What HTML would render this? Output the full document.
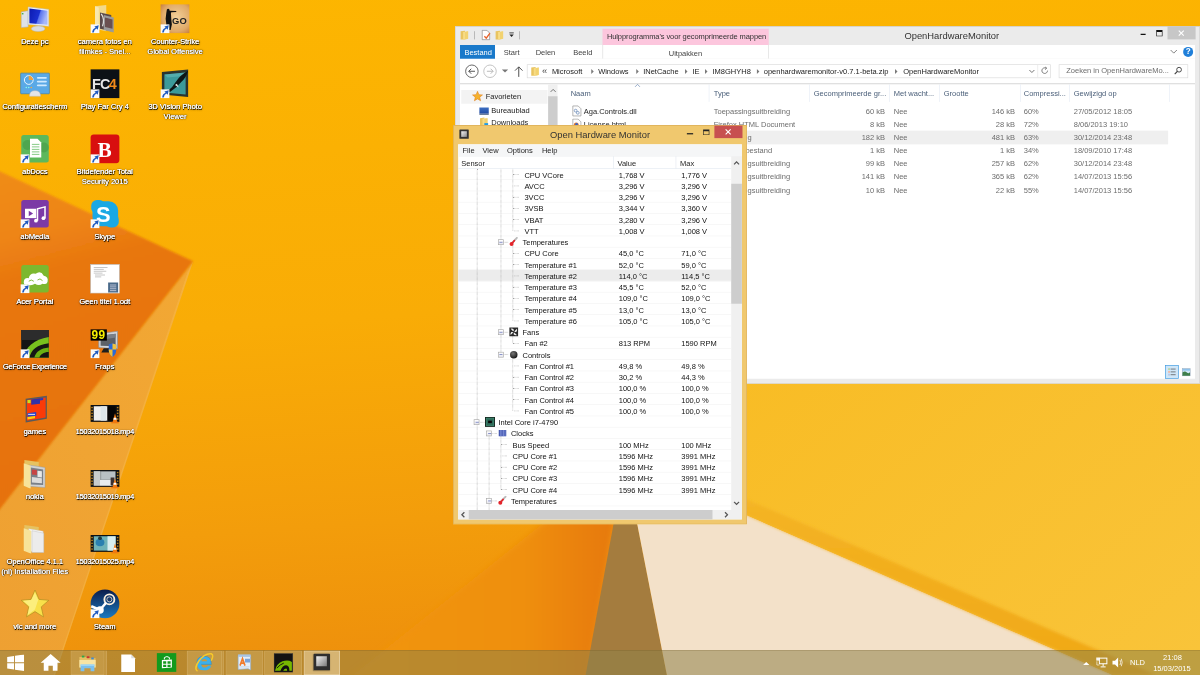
<!DOCTYPE html><html><head><meta charset="utf-8"><style>
html,body{margin:0;padding:0;width:1200px;height:675px;overflow:hidden;background:#f6a60e}
#st{position:absolute;left:0;top:0;width:1920px;height:1080px;transform:scale(0.625);transform-origin:0 0;overflow:hidden;font-family:"Liberation Sans",sans-serif;font-size:12px;color:#000}
.a{position:absolute}
.t{position:absolute;white-space:pre;line-height:15px}
.dl{width:160px;text-align:center;color:#fff;text-shadow:0.4px 0 0 #fff,1px 1px 1px #000,0 0 2px rgba(0,0,0,0.9),1px 1px 3px rgba(0,0,0,0.6)}
</style></head><body><div id="st">
<svg class="a" style="left:0;top:0" width="1920" height="1080" viewBox="0 0 1920 1080">
<defs>
<linearGradient id="gbase" x1="0" y1="0" x2="0.12" y2="1">
<stop offset="0" stop-color="#fdb600"/><stop offset="0.5" stop-color="#f9ac06"/><stop offset="0.8" stop-color="#f39d0b"/><stop offset="1" stop-color="#ee900c"/></linearGradient>
<linearGradient id="gdark" x1="0.2" y1="0" x2="0.35" y2="1">
<stop offset="0" stop-color="#f08c18"/><stop offset="0.18" stop-color="#ee8516"/><stop offset="0.3" stop-color="#e8770f"/><stop offset="1" stop-color="#e6710f"/></linearGradient>
<linearGradient id="gbeam" x1="1" y1="0" x2="0" y2="1">
<stop offset="0" stop-color="#f2a834"/><stop offset="1" stop-color="#eea032"/></linearGradient>
<linearGradient id="gyel" x1="0" y1="0" x2="1" y2="1">
<stop offset="0" stop-color="#f8b91c"/><stop offset="1" stop-color="#f9c43a"/></linearGradient>
<linearGradient id="gor2" x1="0" y1="0" x2="1" y2="0">
<stop offset="0" stop-color="#f2960c"/><stop offset="0.65" stop-color="#ef8f0c"/><stop offset="1" stop-color="#e5760f"/></linearGradient>
<filter id="blr" x="-5%" y="-5%" width="110%" height="110%"><feGaussianBlur stdDeviation="5"/></filter>
<linearGradient id="gcream" x1="0" y1="0" x2="1" y2="1"><stop offset="0" stop-color="#f7ebdc"/><stop offset="1" stop-color="#f2dfc8"/></linearGradient>
<linearGradient id="gband" x1="0" y1="1" x2="0" y2="0"><stop offset="0" stop-color="#f0a816"/><stop offset="0.6" stop-color="#f3b020"/><stop offset="1" stop-color="#f6bb2c"/></linearGradient>
<filter id="blr3" x="-5%" y="-5%" width="110%" height="110%"><feGaussianBlur stdDeviation="1.6"/></filter>
<filter id="blr2" x="-5%" y="-5%" width="110%" height="110%"><feGaussianBlur stdDeviation="2.5"/></filter>
</defs>
<rect width="1920" height="1080" fill="url(#gbase)"/>
<polygon points="540,1100 992,739 1000,739 937,1100" fill="url(#gor2)" filter="url(#blr)"/>
<polygon points="309,418 0,813 0,1080 88,1080" fill="url(#gbeam)"/>
<polygon points="-20,265 309,418 -20,840" fill="url(#gdark)" filter="url(#blr3)"/>
<polygon points="309,418 300,436 86,1080 88,1080" fill="#f8c255" opacity="0.35"/>
<polygon points="1000,739 937,1080 1067,1080" fill="#a47c3e"/>
<polygon points="1000,739 1067,1080 1781,1080" fill="#f3e1c9"/>
<polygon points="1000,739 1781,1080 1920,1080 1920,300 1000,300" fill="url(#gyel)"/>
<polygon points="1000,739 1781,1080 1850,1080 1006,718" fill="url(#gband)" filter="url(#blr2)"/>
</svg>
<svg class="a" style="left:31.5px;top:6.4px" width="48" height="48" viewBox="0 0 48 48"><defs><linearGradient id="gscr" x1="0" y1="0" x2="1" y2="0.3"><stop offset="0" stop-color="#0c1ab0"/><stop offset="0.58" stop-color="#1a30d0"/><stop offset="0.64" stop-color="#5a74ee"/><stop offset="1" stop-color="#a8b8f8"/></linearGradient></defs><path d="M2 13 L13 11 V37 L2 38Z" fill="#dfe2e6" stroke="#a8aeb4" stroke-width="0.8"/><rect x="3" y="15" width="2.5" height="2" fill="#3a3"/><ellipse cx="29" cy="40" rx="11" ry="4.5" fill="#dadcdf" stroke="#b4b8bc" stroke-width="0.8"/><path d="M13 5 L46 9 V36 L13 33Z" fill="#eceff2" stroke="#b8c0c8" stroke-width="0.8"/><path d="M15 7.5 L44 11 V33.5 L15 31Z" fill="url(#gscr)"/></svg>
<div class="t dl" style="left:-24.5px;top:59.9px;letter-spacing:0px">Deze pc</div>
<svg class="a" style="left:31.5px;top:110.4px" width="48" height="48" viewBox="0 0 48 48"><rect x="1" y="7" width="46" height="33" rx="1" fill="#5aa9e6" stroke="#2f7fc4" stroke-width="1"/><circle cx="14" cy="18" r="7" fill="none" stroke="#eaf6ff" stroke-width="1.6"/><path d="M14 11 A7 7 0 0 1 21 18 H14Z" fill="#f2a23a"/><rect x="27" y="13" width="16" height="3" rx="1.5" fill="#cfeaff"/><rect x="27" y="19" width="16" height="3" rx="1.5" fill="#cfeaff"/><rect x="27" y="25" width="16" height="3" rx="1.5" fill="#cfeaff"/><circle cx="10" cy="30" r="1.2" fill="#8fe"/><circle cx="14" cy="30" r="1.2" fill="#8fe"/><circle cx="18" cy="30" r="1.2" fill="#fa3"/><path d="M15 44 Q15 35 24 35 Q33 35 33 44Z" fill="#e4e4e4" stroke="#bbb" stroke-width="0.8"/></svg>
<div class="t dl" style="left:-24.5px;top:163.9px;letter-spacing:0px">Configuratiescherm</div>
<svg class="a" style="left:31.5px;top:214.4px" width="48" height="48" viewBox="0 0 48 48"><rect x="2" y="2" width="44" height="44" rx="4" fill="#5cb85c"/><circle cx="12" cy="18" r="8" fill="#4fa64f"/><circle cx="38" cy="22" r="8" fill="#4fa64f"/><path d="M16 8 H28 L34 14 V38 H16Z" fill="#fff"/><path d="M19 17 H31 M19 21 H31 M19 25 H31 M19 29 H31 M19 33 H31" stroke="#5cb85c" stroke-width="1.2"/><g><rect x="1" y="33" width="14" height="14" fill="#fafafa"/><path d="M3.5 46 Q3.5 40 9 38.2 L7 36.2 L14 34.5 L12.3 41.5 L10.4 39.6 Q6.5 41.5 6 46Z" fill="#1f5ac0"/></g></svg>
<div class="t dl" style="left:-24.5px;top:267.9px;letter-spacing:0px">abDocs</div>
<svg class="a" style="left:31.5px;top:318.4px" width="48" height="48" viewBox="0 0 48 48"><rect x="2" y="2" width="44" height="44" rx="4" fill="#7c3aa6"/><rect x="8" y="16" width="18" height="15" fill="#fff"/><path d="M14 19 L21 23.5 L14 28Z" fill="#7c3aa6"/><path d="M28 35 V16 L40 13 V31" fill="none" stroke="#fff" stroke-width="2.4"/><circle cx="25.5" cy="35" r="3" fill="#fff"/><circle cx="37.5" cy="31" r="3" fill="#fff"/><g><rect x="1" y="33" width="14" height="14" fill="#fafafa"/><path d="M3.5 46 Q3.5 40 9 38.2 L7 36.2 L14 34.5 L12.3 41.5 L10.4 39.6 Q6.5 41.5 6 46Z" fill="#1f5ac0"/></g></svg>
<div class="t dl" style="left:-24.5px;top:371.9px;letter-spacing:0px">abMedia</div>
<svg class="a" style="left:31.5px;top:422.4px" width="48" height="48" viewBox="0 0 48 48"><rect x="2" y="2" width="44" height="44" rx="4" fill="#7cb82f"/><path d="M6 30 Q6 22 14 23 Q16 14 25 16 Q33 10 38 19 Q46 20 44 29 Q42 34 36 32 Q30 36 24 32 Q18 36 12 33 Q6 35 6 30Z" fill="#fff"/><path d="M14 28 Q18 24 22 28 M28 26 Q32 22 36 27" fill="none" stroke="#7cb82f" stroke-width="1.5"/><g><rect x="1" y="33" width="14" height="14" fill="#fafafa"/><path d="M3.5 46 Q3.5 40 9 38.2 L7 36.2 L14 34.5 L12.3 41.5 L10.4 39.6 Q6.5 41.5 6 46Z" fill="#1f5ac0"/></g></svg>
<div class="t dl" style="left:-24.5px;top:475.9px;letter-spacing:0px">Acer Portal</div>
<svg class="a" style="left:31.5px;top:526.4px" width="48" height="48" viewBox="0 0 48 48"><rect x="2" y="2" width="44" height="44" fill="#151515"/><rect x="2" y="2" width="44" height="16" fill="#2c2c2c"/><path d="M6 46 C8 30 22 17 46 13 V46Z" fill="#78c01e"/><path d="M15 46 C17 34 28 25 46 23 V46Z" fill="#151515"/><path d="M23 46 C25 37 33 31 46 30 V46Z" fill="#6ab012"/><path d="M31 46 C32 41 38 37 46 37 V46Z" fill="#151515"/><g><rect x="1" y="33" width="14" height="14" fill="#fafafa"/><path d="M3.5 46 Q3.5 40 9 38.2 L7 36.2 L14 34.5 L12.3 41.5 L10.4 39.6 Q6.5 41.5 6 46Z" fill="#1f5ac0"/></g></svg>
<div class="t dl" style="left:-24.5px;top:579.9px;letter-spacing:-0.45px">GeForce Experience</div>
<svg class="a" style="left:31.5px;top:630.4px" width="48" height="48" viewBox="0 0 48 48"><path d="M9 8 L43 3 V40 L9 46Z" fill="#5a5a5a"/><path d="M11 10 L41 6 V38 L11 43Z" fill="#fb3a08"/><path d="M18 9 L32 7.2 V16 L18 17.5Z" fill="#3232a8"/><path d="M32 7.2 L37 6.6 V10 L32 10.6Z" fill="#2a3ab8"/><rect x="12" y="10" width="5" height="5" fill="#c8e020"/><path d="M12 31 L26 29 V35 L12 37Z" fill="#2a44c8"/><path d="M13 33 H24" stroke="#fff" stroke-width="1.4"/><path d="M12 37 L24 35.5 V39 L12 41Z" fill="#f8d010"/></svg>
<div class="t dl" style="left:-24.5px;top:683.9px;letter-spacing:0px">games</div>
<svg class="a" style="left:31.5px;top:734.4px" width="48" height="48" viewBox="0 0 48 48"><path d="M7 2 L30 5 L30 40 L7 44Z" fill="#e6c260"/><path d="M14 10 L40 14 V46 L14 44Z" fill="#cfd2d4" stroke="#9a9a9a" stroke-width="0.8"/><path d="M17 14 L37 17 V42 L17 41Z" fill="#7a8088"/><path d="M19 17 L27 18 V26 L19 25Z" fill="#c84444"/><path d="M28 19 L35 20 V30 L28 29Z" fill="#e8e8e8"/><path d="M19 29 L35 31 V39 L19 38Z" fill="#dcdcdc"/><path d="M6 7 L17 11 V48 L6 43Z" fill="#f7e39a"/></svg>
<div class="t dl" style="left:-24.5px;top:787.9px;letter-spacing:0px">nokia</div>
<svg class="a" style="left:31.5px;top:838.4px" width="48" height="48" viewBox="0 0 48 48"><path d="M7 2 L30 5 L30 40 L7 44Z" fill="#e6c260"/><path d="M14 8 L37 12 V45 L14 44Z" fill="#fbfbfb" stroke="#c8c8c8" stroke-width="0.8"/><path d="M19 11 L38 15 V46 L19 46Z" fill="#ececec" stroke="#bdbdbd" stroke-width="0.8"/><path d="M6 7 L18 11 V48 L6 43Z" fill="#f7e39a"/></svg>
<div class="t dl" style="left:-24.5px;top:891.9px;letter-spacing:0px">OpenOffice 4.1.1</div>
<div class="t dl" style="left:-24.5px;top:906.9px;letter-spacing:0px">(nl) Installation Files</div>
<svg class="a" style="left:31.5px;top:942.4px" width="48" height="48" viewBox="0 0 48 48"><path d="M24 2 L30.5 17 L46 18.5 L34 29 L37.5 45 L24 36.5 L10.5 45 L14 29 L2 18.5 L17.5 17Z" fill="#f8e04a" stroke="#a88a20" stroke-width="1"/><path d="M24 6 L29 18 L24 33 L12 42 L15 28 L5 19 L18 18Z" fill="#fff6a0" opacity="0.6"/></svg>
<div class="t dl" style="left:-24.5px;top:995.9px;letter-spacing:0px">vlc and more</div>
<svg class="a" style="left:143.5px;top:6.4px" width="48" height="48" viewBox="0 0 48 48"><path d="M8 4 L26 2 V44 L8 40Z" fill="#f2d98a"/><path d="M8 4 L14 6 V42 L8 40Z" fill="#f8e8b0"/><path d="M16 14 L34 18 V44 L16 40Z" fill="#5a4a4a"/><path d="M22 18 L38 22 V46 L22 42Z" fill="#9a9a9a"/><path d="M24 22 L36 25 V40 L24 37Z" fill="#6a5050"/><path d="M18 16 Q24 24 20 36" fill="none" stroke="#e0e0e0" stroke-width="2"/><g><rect x="1" y="33" width="14" height="14" fill="#fafafa"/><path d="M3.5 46 Q3.5 40 9 38.2 L7 36.2 L14 34.5 L12.3 41.5 L10.4 39.6 Q6.5 41.5 6 46Z" fill="#1f5ac0"/></g></svg>
<div class="t dl" style="left:87.5px;top:59.9px;letter-spacing:0px">camera fotos en</div>
<div class="t dl" style="left:87.5px;top:74.9px;letter-spacing:0px">filmkes - Snel...</div>
<svg class="a" style="left:143.5px;top:110.4px" width="48" height="48" viewBox="0 0 48 48"><rect x="1" y="1" width="46" height="46" fill="#0c1116"/><text x="3" y="33" font-family="Liberation Sans" font-weight="bold" font-size="23" fill="#e8e8e8" letter-spacing="-1">FC</text><text x="30" y="33" font-family="Liberation Sans" font-weight="bold" font-size="23" fill="#f08a1a">4</text><g><rect x="1" y="33" width="14" height="14" fill="#fafafa"/><path d="M3.5 46 Q3.5 40 9 38.2 L7 36.2 L14 34.5 L12.3 41.5 L10.4 39.6 Q6.5 41.5 6 46Z" fill="#1f5ac0"/></g></svg>
<div class="t dl" style="left:87.5px;top:163.9px;letter-spacing:0px">Play Far Cry 4</div>
<svg class="a" style="left:143.5px;top:214.4px" width="48" height="48" viewBox="0 0 48 48"><rect x="1" y="1" width="46" height="46" rx="5" fill="#d80f0f"/><text x="12" y="37" font-family="Liberation Serif" font-weight="bold" font-size="34" fill="#fff">B</text><g><rect x="1" y="33" width="14" height="14" fill="#fafafa"/><path d="M3.5 46 Q3.5 40 9 38.2 L7 36.2 L14 34.5 L12.3 41.5 L10.4 39.6 Q6.5 41.5 6 46Z" fill="#1f5ac0"/></g></svg>
<div class="t dl" style="left:87.5px;top:267.9px;letter-spacing:0px">Bitdefender Total</div>
<div class="t dl" style="left:87.5px;top:282.9px;letter-spacing:0px">Security 2015</div>
<svg class="a" style="left:143.5px;top:318.4px" width="48" height="48" viewBox="0 0 48 48"><rect x="4" y="4" width="41" height="40" rx="15" fill="#1aa8e4"/><rect x="2" y="2" width="22" height="22" rx="9" fill="#1aa8e4"/><rect x="24" y="24" width="22" height="22" rx="9" fill="#1aa8e4"/><text x="9.5" y="37" font-family="Liberation Sans" font-weight="bold" font-size="35" fill="#fff">S</text><g><rect x="1" y="33" width="14" height="14" fill="#fafafa"/><path d="M3.5 46 Q3.5 40 9 38.2 L7 36.2 L14 34.5 L12.3 41.5 L10.4 39.6 Q6.5 41.5 6 46Z" fill="#1f5ac0"/></g></svg>
<div class="t dl" style="left:87.5px;top:371.9px;letter-spacing:0px">Skype</div>
<svg class="a" style="left:143.5px;top:422.4px" width="48" height="48" viewBox="0 0 48 48"><rect x="1" y="1" width="46" height="46" fill="#fff" stroke="#bbb" stroke-width="1"/><path d="M6 6 H28 M6 9 H22 M6 12 H26 M6 15 H20 M8 18 H24 M8 21 H18" stroke="#999" stroke-width="0.9"/><rect x="29" y="30" width="16" height="16" fill="#4a6a8a"/><path d="M32 34 H42 M32 37 H42 M32 40 H42 M32 43 H42" stroke="#dde" stroke-width="1.2"/></svg>
<div class="t dl" style="left:87.5px;top:475.9px;letter-spacing:0px">Geen titel 1.odt</div>
<svg class="a" style="left:143.5px;top:526.4px" width="48" height="48" viewBox="0 0 48 48"><path d="M14 8 L44 4 V32 L14 30Z" fill="#d0d4d8" stroke="#8a9099" stroke-width="1"/><path d="M17 11 L41 8 V28 L17 27Z" fill="#5c6168"/><path d="M17 11 L41 8 V14 L17 18Z" fill="#7a8088"/><path d="M22 31 H34 L38 38 H18Z" fill="#1e1e1e"/><rect x="1" y="1" width="26" height="18" fill="#000"/><text x="2" y="17" font-family="Liberation Mono" font-weight="bold" font-size="19" fill="#f6f000">99</text><path d="M30 25 Q36 22 42 25 V34 Q42 41 36 45 Q30 41 30 34Z" fill="#2a6ad8"/><path d="M36 23.5 V33 H42 V25Z M30 33 H36 V45 Q30 41 30 34Z" fill="#f2c23a"/><g><rect x="1" y="33" width="14" height="14" fill="#fafafa"/><path d="M3.5 46 Q3.5 40 9 38.2 L7 36.2 L14 34.5 L12.3 41.5 L10.4 39.6 Q6.5 41.5 6 46Z" fill="#1f5ac0"/></g></svg>
<div class="t dl" style="left:87.5px;top:579.9px;letter-spacing:0px">Fraps</div>
<svg class="a" style="left:143.5px;top:630.4px" width="48" height="48" viewBox="0 0 48 48"><rect x="1" y="18" width="46" height="27" fill="#0e1114"/><rect x="2" y="21.0" width="2.5" height="2.2" fill="#b8801e"/><rect x="43" y="21.0" width="2.5" height="2.2" fill="#b8801e"/><rect x="2" y="25.6" width="2.5" height="2.2" fill="#b8801e"/><rect x="43" y="25.6" width="2.5" height="2.2" fill="#b8801e"/><rect x="2" y="30.2" width="2.5" height="2.2" fill="#b8801e"/><rect x="43" y="30.2" width="2.5" height="2.2" fill="#b8801e"/><rect x="2" y="34.8" width="2.5" height="2.2" fill="#b8801e"/><rect x="43" y="34.8" width="2.5" height="2.2" fill="#b8801e"/><rect x="2" y="39.4" width="2.5" height="2.2" fill="#b8801e"/><rect x="43" y="39.4" width="2.5" height="2.2" fill="#b8801e"/><rect x="6" y="20" width="22" height="23" fill="#eef0f0"/><rect x="17" y="20" width="9" height="23" fill="#dde6ea"/><rect x="28" y="20" width="13" height="23" fill="#050505"/><path d="M36 46 L40 31 L44 46Z" fill="#f07a10"/><path d="M38 38.5 H42 L42.7 41.5 H37.3Z" fill="#fff"/><path d="M37.8 34.5 H42.2" stroke="#fff" stroke-width="0"/><rect x="34" y="45" width="12" height="2.5" fill="#f07a10"/></svg>
<div class="t dl" style="left:87.5px;top:683.9px;letter-spacing:-0.45px">15032015018.mp4</div>
<svg class="a" style="left:143.5px;top:734.4px" width="48" height="48" viewBox="0 0 48 48"><rect x="1" y="18" width="46" height="27" fill="#0e1114"/><rect x="2" y="21.0" width="2.5" height="2.2" fill="#b8801e"/><rect x="43" y="21.0" width="2.5" height="2.2" fill="#b8801e"/><rect x="2" y="25.6" width="2.5" height="2.2" fill="#b8801e"/><rect x="43" y="25.6" width="2.5" height="2.2" fill="#b8801e"/><rect x="2" y="30.2" width="2.5" height="2.2" fill="#b8801e"/><rect x="43" y="30.2" width="2.5" height="2.2" fill="#b8801e"/><rect x="2" y="34.8" width="2.5" height="2.2" fill="#b8801e"/><rect x="43" y="34.8" width="2.5" height="2.2" fill="#b8801e"/><rect x="2" y="39.4" width="2.5" height="2.2" fill="#b8801e"/><rect x="43" y="39.4" width="2.5" height="2.2" fill="#b8801e"/><rect x="6" y="20" width="35" height="23" fill="#9aa0a2"/><rect x="6" y="20" width="10" height="23" fill="#c8cccc"/><rect x="18" y="21" width="22" height="12" fill="#b8c0c4"/><rect x="16" y="34" width="18" height="9" fill="#e8ecee"/><rect x="33" y="30" width="6" height="12" fill="#3a3030"/><path d="M36 46 L40 31 L44 46Z" fill="#f07a10"/><path d="M38 38.5 H42 L42.7 41.5 H37.3Z" fill="#fff"/><path d="M37.8 34.5 H42.2" stroke="#fff" stroke-width="0"/><rect x="34" y="45" width="12" height="2.5" fill="#f07a10"/></svg>
<div class="t dl" style="left:87.5px;top:787.9px;letter-spacing:-0.45px">15032015019.mp4</div>
<svg class="a" style="left:143.5px;top:838.4px" width="48" height="48" viewBox="0 0 48 48"><rect x="1" y="18" width="46" height="27" fill="#0e1114"/><rect x="2" y="21.0" width="2.5" height="2.2" fill="#b8801e"/><rect x="43" y="21.0" width="2.5" height="2.2" fill="#b8801e"/><rect x="2" y="25.6" width="2.5" height="2.2" fill="#b8801e"/><rect x="43" y="25.6" width="2.5" height="2.2" fill="#b8801e"/><rect x="2" y="30.2" width="2.5" height="2.2" fill="#b8801e"/><rect x="43" y="30.2" width="2.5" height="2.2" fill="#b8801e"/><rect x="2" y="34.8" width="2.5" height="2.2" fill="#b8801e"/><rect x="43" y="34.8" width="2.5" height="2.2" fill="#b8801e"/><rect x="2" y="39.4" width="2.5" height="2.2" fill="#b8801e"/><rect x="43" y="39.4" width="2.5" height="2.2" fill="#b8801e"/><rect x="6" y="20" width="35" height="23" fill="#6fb3b8"/><rect x="28" y="20" width="13" height="23" fill="#d8eef0"/><ellipse cx="16" cy="30" rx="7" ry="6" fill="#2a80b0"/><circle cx="16" cy="23" r="3" fill="#203a40"/><path d="M36 46 L40 31 L44 46Z" fill="#f07a10"/><path d="M38 38.5 H42 L42.7 41.5 H37.3Z" fill="#fff"/><path d="M37.8 34.5 H42.2" stroke="#fff" stroke-width="0"/><rect x="34" y="45" width="12" height="2.5" fill="#f07a10"/></svg>
<div class="t dl" style="left:87.5px;top:891.9px;letter-spacing:-0.45px">15032015025.mp4</div>
<svg class="a" style="left:143.5px;top:942.4px" width="48" height="48" viewBox="0 0 48 48"><defs><linearGradient id="gst" x1="0" y1="0" x2="0" y2="1"><stop offset="0" stop-color="#0c1c4a"/><stop offset="1" stop-color="#1a7ac0"/></linearGradient></defs><circle cx="24" cy="24" r="23" fill="url(#gst)"/><circle cx="31" cy="17" r="8" fill="none" stroke="#fbeedc" stroke-width="3"/><circle cx="31" cy="17" r="4" fill="#1a3a6a" stroke="#fbeedc" stroke-width="1.2"/><path d="M2 28 L16 34 L26 22" fill="none" stroke="#fff" stroke-width="4"/><circle cx="16" cy="34" r="6" fill="#fff"/><g><rect x="1" y="33" width="14" height="14" fill="#fafafa"/><path d="M3.5 46 Q3.5 40 9 38.2 L7 36.2 L14 34.5 L12.3 41.5 L10.4 39.6 Q6.5 41.5 6 46Z" fill="#1f5ac0"/></g></svg>
<div class="t dl" style="left:87.5px;top:995.9px;letter-spacing:0px">Steam</div>
<svg class="a" style="left:256.0px;top:6.4px" width="48" height="48" viewBox="0 0 48 48"><defs><radialGradient id="gcs" cx="0.55" cy="0.45" r="0.7"><stop offset="0" stop-color="#f2d09a"/><stop offset="0.7" stop-color="#e0aa68"/><stop offset="1" stop-color="#c9803e"/></radialGradient></defs><rect x="1" y="1" width="46" height="46" fill="url(#gcs)"/><path d="M11 9 Q13 7 15 9 L15.5 11 L26 11.5 L26 13 L18 13.5 L17.5 15 L18 24 L19 33 L17 42 H13.5 L14 34 L11 39 L8 40 L10 32 L9 24 L10 15Z" fill="#111"/><text x="19" y="33" font-family="Liberation Sans" font-weight="bold" font-size="15" fill="#222" letter-spacing="0.5">GO</text><g><rect x="1" y="33" width="14" height="14" fill="#fafafa"/><path d="M3.5 46 Q3.5 40 9 38.2 L7 36.2 L14 34.5 L12.3 41.5 L10.4 39.6 Q6.5 41.5 6 46Z" fill="#1f5ac0"/></g></svg>
<div class="t dl" style="left:200.0px;top:59.9px;letter-spacing:0px">Counter-Strike</div>
<div class="t dl" style="left:200.0px;top:74.9px;letter-spacing:0px">Global Offensive</div>
<svg class="a" style="left:256.0px;top:110.4px" width="48" height="48" viewBox="0 0 48 48"><path d="M3 5 L45 1 V45 L3 41Z" fill="#2a3430"/><path d="M7 9 L41 6 V41 L7 38Z" fill="#3c9a9a"/><path d="M7 9 L41 6 L34 12 L12 14Z" fill="#6ac0c0" opacity="0.5"/><path d="M12 36 Q20 30 26 20 Q32 10 45 3 Q42 14 34 21 Q27 30 16 37Z" fill="#0e1616"/><path d="M24 26 L30 30 L27 24Z" fill="#eee"/><g><rect x="1" y="33" width="14" height="14" fill="#fafafa"/><path d="M3.5 46 Q3.5 40 9 38.2 L7 36.2 L14 34.5 L12.3 41.5 L10.4 39.6 Q6.5 41.5 6 46Z" fill="#1f5ac0"/></g></svg>
<div class="t dl" style="left:200.0px;top:163.9px;letter-spacing:0px">3D Vision Photo</div>
<div class="t dl" style="left:200.0px;top:178.9px;letter-spacing:0px">Viewer</div>
<div class="a" style="left:728px;top:42px;width:1192px;height:572px;background:#ebebeb;box-shadow:0 0 0 1px #d0d0d0 inset"></div>
<svg class="a" style="left:736px;top:48px" width="14" height="16" viewBox="0 0 14 16"><path d="M1 2 L8 1 L8 15 L1 15 Z" fill="#e9c460"/><path d="M5 3 L13 2 L13 14 L5 15 Z" fill="#f7dc86"/><path d="M8 3 L13 2 L13 14 L8 15Z" fill="#f2d270"/></svg>
<div class="a" style="left:759px;top:50px;width:1px;height:13px;background:#9a9a9a"></div>
<svg class="a" style="left:770px;top:47px" width="15" height="18" viewBox="0 0 15 18"><path d="M1.5 1.5 H9 L13.5 6 V16.5 H1.5 Z" fill="#fff" stroke="#777" stroke-width="1"/><path d="M5 11 L8 14 L14 6" fill="none" stroke="#e8632c" stroke-width="2.2"/></svg>
<svg class="a" style="left:792px;top:48px" width="14" height="16" viewBox="0 0 14 16"><path d="M1 2 L8 1 L8 15 L1 15 Z" fill="#e9c460"/><path d="M5 3 L13 2 L13 14 L5 15 Z" fill="#f7dc86"/><path d="M8 3 L13 2 L13 14 L8 15Z" fill="#f2d270"/></svg>
<svg class="a" style="left:814px;top:51px" width="9" height="9" viewBox="0 0 9 9"><rect x="1" y="1" width="7" height="1.3" fill="#222"/><path d="M1 4 H8 L4.5 8Z" fill="#222"/></svg>
<div class="a" style="left:831px;top:50px;width:1px;height:13px;background:#9a9a9a"></div>
<div class="a" style="left:964px;top:46px;width:266px;height:26px;background:#fcc6dd"></div>
<div class="t" style="left:971px;top:52px;color:#333;letter-spacing:-0.15px">Hulpprogramma's voor gecomprimeerde mappen</div>
<div class="t" style="left:1447px;top:48.5px;font-size:15px;line-height:18px;color:#333">OpenHardwareMonitor</div>
<div class="a" style="left:1825px;top:54px;width:8px;height:2px;background:#111"></div>
<div class="a" style="left:1850px;top:48px;width:8px;height:6px;border:1.5px solid #111;border-top-width:3px"></div>
<div class="a" style="left:1868px;top:42px;width:45px;height:21px;background:#c7c7c7"></div>
<svg class="a" style="left:1882px;top:46px" width="16" height="14" viewBox="0 0 16 14"><path d="M4 3 L12 11 M12 3 L4 11" stroke="#fff" stroke-width="1.8"/></svg>
<div class="a" style="left:736px;top:72px;width:1176px;height:22px;background:#fff"></div>
<div class="a" style="left:736px;top:72px;width:56px;height:23px;background:#1979ca"></div>
<div class="t" style="left:743px;top:77px;color:#fff">Bestand</div>
<div class="t" style="left:806px;top:77px;color:#444">Start</div>
<div class="t" style="left:857px;top:77px;color:#444">Delen</div>
<div class="t" style="left:917px;top:77px;color:#444">Beeld</div>
<div class="a" style="left:964px;top:72px;width:1px;height:22px;background:#dadada"></div>
<div class="a" style="left:1229px;top:72px;width:1px;height:22px;background:#dadada"></div>
<div class="t" style="left:1070px;top:78px;color:#444">Uitpakken</div>
<svg class="a" style="left:1872px;top:78px" width="12" height="9" viewBox="0 0 12 9"><path d="M1 2 L6 7 L11 2" fill="none" stroke="#666" stroke-width="1.3"/></svg>
<div class="a" style="left:1893px;top:75px;width:16px;height:16px;border-radius:50%;background:#1f7fd9;color:#fff;font-weight:bold;font-size:13px;line-height:16px;text-align:center">?</div>
<div class="a" style="left:736px;top:94px;width:1176px;height:40px;background:#fff"></div>
<div class="a" style="left:736px;top:133px;width:1176px;height:2px;background:#dcdcdc"></div>
<svg class="a" style="left:743px;top:102px" width="56" height="24" viewBox="0 0 56 24"><circle cx="12" cy="12" r="10" fill="none" stroke="#555" stroke-width="1.4"/><path d="M17 12 H7 M11 8 L7 12 L11 16" fill="none" stroke="#555" stroke-width="1.6"/><circle cx="41" cy="12" r="10" fill="none" stroke="#bbb" stroke-width="1.4"/><path d="M36 12 H46 M42 8 L46 12 L42 16" fill="none" stroke="#bbb" stroke-width="1.6"/></svg>
<svg class="a" style="left:802px;top:110px" width="12" height="8" viewBox="0 0 12 8"><path d="M1 1 H11 L6 6Z" fill="#777"/></svg>
<svg class="a" style="left:822px;top:104px" width="16" height="20" viewBox="0 0 16 20"><path d="M8 19 V3 M2 9 L8 3 L14 9" fill="none" stroke="#444" stroke-width="1.5"/></svg>
<div class="a" style="left:843px;top:103px;width:836px;height:20px;border:1px solid #d9d9d9;background:#fff"></div>
<svg class="a" style="left:849px;top:106px" width="14" height="16" viewBox="0 0 14 16"><path d="M1 2 L8 1 L8 15 L1 15 Z" fill="#e9c460"/><path d="M5 3 L13 2 L13 14 L5 15 Z" fill="#f7dc86"/><path d="M8 3 L13 2 L13 14 L8 15Z" fill="#f2d270"/></svg>
<div class="t" style="left:867px;top:105px;color:#444;font-size:15px;line-height:18px">«</div>
<div class="t" style="left:883px;top:107px;color:#222">Microsoft</div>
<svg class="a" style="left:945px;top:110px" width="6" height="9" viewBox="0 0 6 9"><path d="M1 0.5 L5 4.5 L1 8.5Z" fill="#7a7a7a"/></svg>
<div class="t" style="left:957px;top:107px;color:#222">Windows</div>
<svg class="a" style="left:1017px;top:110px" width="6" height="9" viewBox="0 0 6 9"><path d="M1 0.5 L5 4.5 L1 8.5Z" fill="#7a7a7a"/></svg>
<div class="t" style="left:1029px;top:107px;color:#222">INetCache</div>
<svg class="a" style="left:1095px;top:110px" width="6" height="9" viewBox="0 0 6 9"><path d="M1 0.5 L5 4.5 L1 8.5Z" fill="#7a7a7a"/></svg>
<div class="t" style="left:1108px;top:107px;color:#222">IE</div>
<svg class="a" style="left:1127px;top:110px" width="6" height="9" viewBox="0 0 6 9"><path d="M1 0.5 L5 4.5 L1 8.5Z" fill="#7a7a7a"/></svg>
<div class="t" style="left:1140px;top:107px;color:#222">IM8GHYH8</div>
<svg class="a" style="left:1210px;top:110px" width="6" height="9" viewBox="0 0 6 9"><path d="M1 0.5 L5 4.5 L1 8.5Z" fill="#7a7a7a"/></svg>
<div class="t" style="left:1222px;top:107px;color:#222">openhardwaremonitor-v0.7.1-beta.zip</div>
<svg class="a" style="left:1431px;top:110px" width="6" height="9" viewBox="0 0 6 9"><path d="M1 0.5 L5 4.5 L1 8.5Z" fill="#7a7a7a"/></svg>
<div class="t" style="left:1445px;top:107px;color:#222">OpenHardwareMonitor</div>
<svg class="a" style="left:1646px;top:110px" width="10" height="8" viewBox="0 0 10 8"><path d="M1 2 L5 6 L9 2" fill="none" stroke="#555" stroke-width="1.3"/></svg>
<div class="a" style="left:1660px;top:104px;width:1px;height:20px;background:#e3e3e3"></div>
<svg class="a" style="left:1665px;top:106px" width="14" height="14" viewBox="0 0 14 14"><path d="M11 7 A4.5 4.5 0 1 1 8.5 3" fill="none" stroke="#666" stroke-width="1.3"/><path d="M7 1 L10 3 L7 5.5" fill="none" stroke="#666" stroke-width="1.2"/></svg>
<div class="a" style="left:1694px;top:103px;width:205px;height:20px;border:1px solid #d9d9d9;background:#fff"></div>
<div class="t" style="left:1706px;top:106px;color:#6d6d6d">Zoeken in OpenHardwareMo...</div>
<svg class="a" style="left:1878px;top:106px" width="14" height="14" viewBox="0 0 14 14"><circle cx="8.5" cy="5.5" r="3.8" fill="none" stroke="#444" stroke-width="1.5"/><path d="M6 8 L1.5 12.5" stroke="#444" stroke-width="1.8"/></svg>
<div class="a" style="left:736px;top:135px;width:1176px;height:471px;background:#fff"></div>
<div class="a" style="left:738px;top:144px;width:138px;height:22px;background:#f3f3f3"></div>
<svg class="a" style="left:755px;top:145px" width="18" height="18" viewBox="0 0 18 18"><path d="M9 1 L11.3 6.4 L17 6.8 L12.6 10.5 L14 16.3 L9 13.2 L4 16.3 L5.4 10.5 L1 6.8 L6.7 6.4Z" fill="#f5b22c" stroke="#e07a1c" stroke-width="0.8"/></svg>
<div class="t" style="left:777px;top:148px;color:#222">Favorieten</div>
<div class="a" style="left:767px;top:172px;width:15px;height:10px;background:linear-gradient(#3d6fc2,#2149a0);border-bottom:2px solid #6b7d99"></div>
<div class="t" style="left:786px;top:169px;color:#222">Bureaublad</div>
<svg class="a" style="left:767px;top:187px" width="14" height="16" viewBox="0 0 14 16"><path d="M1 2 L8 1 L8 15 L1 15 Z" fill="#e9c460"/><path d="M5 3 L13 2 L13 14 L5 15 Z" fill="#f7dc86"/><path d="M8 3 L13 2 L13 14 L8 15Z" fill="#f2d270"/></svg>
<div class="a" style="left:775px;top:197px;width:6px;height:6px;background:#1e9be8"></div>
<div class="t" style="left:786px;top:189px;color:#222">Downloads</div>
<div class="a" style="left:877px;top:135px;width:15px;height:471px;background:#f0f0f0"></div>
<div class="a" style="left:877px;top:154px;width:15px;height:120px;background:#cdcdcd"></div>
<svg class="a" style="left:880px;top:141px" width="10" height="7" viewBox="0 0 10 7"><path d="M1 6 L5 2 L9 6" fill="none" stroke="#606060" stroke-width="1.4"/></svg>
<div class="t" style="left:913px;top:142px;color:#4c607a">Naam</div>
<div class="t" style="left:1142px;top:142px;color:#4c607a">Type</div>
<div class="t" style="left:1302px;top:142px;color:#4c607a">Gecomprimeerde gr...</div>
<div class="t" style="left:1430px;top:142px;color:#4c607a">Met wacht...</div>
<div class="t" style="left:1510px;top:142px;color:#4c607a">Grootte</div>
<div class="t" style="left:1638px;top:142px;color:#4c607a">Compressi...</div>
<div class="t" style="left:1718px;top:142px;color:#4c607a">Gewijzigd op</div>
<div class="a" style="left:1134px;top:135px;width:1px;height:28px;background:#e5ecf5"></div>
<div class="a" style="left:1295px;top:135px;width:1px;height:28px;background:#e5ecf5"></div>
<div class="a" style="left:1423px;top:135px;width:1px;height:28px;background:#e5ecf5"></div>
<div class="a" style="left:1503px;top:135px;width:1px;height:28px;background:#e5ecf5"></div>
<div class="a" style="left:1632px;top:135px;width:1px;height:28px;background:#e5ecf5"></div>
<div class="a" style="left:1711px;top:135px;width:1px;height:28px;background:#e5ecf5"></div>
<div class="a" style="left:1871px;top:135px;width:1px;height:28px;background:#e5ecf5"></div>
<svg class="a" style="left:1015px;top:134px" width="10" height="6" viewBox="0 0 10 6"><path d="M1 5 L5 1 L9 5" fill="none" stroke="#7591b8" stroke-width="1.2"/></svg>
<svg class="a" style="left:915px;top:168px" width="16" height="19" viewBox="0 0 16 19"><path d="M1.5 1.5 H10 L14.5 6 V17.5 H1.5Z" fill="#fdfdfd" stroke="#8a8a8a"/><circle cx="6" cy="9" r="2.2" fill="none" stroke="#6a8ab8" stroke-width="1.2"/><circle cx="9.5" cy="12.5" r="2.2" fill="none" stroke="#6a8ab8" stroke-width="1.2"/></svg>
<div class="t" style="left:934px;top:171px;color:#1e1e1e">Aga.Controls.dll</div>
<div class="t" style="left:1142px;top:171px;color:#6d6d6d">Toepassingsuitbreiding</div>
<div class="t" style="left:1300px;top:171px;width:116px;text-align:right;color:#6d6d6d">60 kB</div>
<div class="t" style="left:1430px;top:171px;color:#6d6d6d">Nee</div>
<div class="t" style="left:1510px;top:171px;width:114px;text-align:right;color:#6d6d6d">146 kB</div>
<div class="t" style="left:1638px;top:171px;color:#6d6d6d">60%</div>
<div class="t" style="left:1718px;top:171px;color:#6d6d6d">27/05/2012 18:05</div>
<svg class="a" style="left:915px;top:189px" width="16" height="19" viewBox="0 0 16 19"><path d="M1.5 1.5 H10 L14.5 6 V17.5 H1.5Z" fill="#fdfdfd" stroke="#8a8a8a"/><circle cx="7" cy="11" r="4" fill="#e8742a"/><circle cx="7.5" cy="10" r="2.2" fill="#3a6ac8"/></svg>
<div class="t" style="left:934px;top:192px;color:#1e1e1e">License.html</div>
<div class="t" style="left:1142px;top:192px;color:#6d6d6d">Firefox HTML Document</div>
<div class="t" style="left:1300px;top:192px;width:116px;text-align:right;color:#6d6d6d">8 kB</div>
<div class="t" style="left:1430px;top:192px;color:#6d6d6d">Nee</div>
<div class="t" style="left:1510px;top:192px;width:114px;text-align:right;color:#6d6d6d">28 kB</div>
<div class="t" style="left:1638px;top:192px;color:#6d6d6d">72%</div>
<div class="t" style="left:1718px;top:192px;color:#6d6d6d">8/06/2013 19:10</div>
<div class="a" style="left:900px;top:209px;width:969px;height:22px;background:#efefef"></div>
<div class="t" style="left:934px;top:213px;color:#1e1e1e">OpenHardwareMonitor.exe</div>
<div class="t" style="left:1142px;top:213px;color:#6d6d6d">Toepassing</div>
<div class="t" style="left:1300px;top:213px;width:116px;text-align:right;color:#6d6d6d">182 kB</div>
<div class="t" style="left:1430px;top:213px;color:#6d6d6d">Nee</div>
<div class="t" style="left:1510px;top:213px;width:114px;text-align:right;color:#6d6d6d">481 kB</div>
<div class="t" style="left:1638px;top:213px;color:#6d6d6d">63%</div>
<div class="t" style="left:1718px;top:213px;color:#6d6d6d">30/12/2014 23:48</div>
<div class="t" style="left:934px;top:234px;color:#1e1e1e">OpenHardwareMonitor.config</div>
<div class="t" style="left:1142px;top:234px;color:#6d6d6d">CONFIG-bestand</div>
<div class="t" style="left:1300px;top:234px;width:116px;text-align:right;color:#6d6d6d">1 kB</div>
<div class="t" style="left:1430px;top:234px;color:#6d6d6d">Nee</div>
<div class="t" style="left:1510px;top:234px;width:114px;text-align:right;color:#6d6d6d">1 kB</div>
<div class="t" style="left:1638px;top:234px;color:#6d6d6d">34%</div>
<div class="t" style="left:1718px;top:234px;color:#6d6d6d">18/09/2010 17:48</div>
<div class="t" style="left:934px;top:255px;color:#1e1e1e">OpenHardwareMonitorLib.dll</div>
<div class="t" style="left:1142px;top:255px;color:#6d6d6d">Toepassingsuitbreiding</div>
<div class="t" style="left:1300px;top:255px;width:116px;text-align:right;color:#6d6d6d">99 kB</div>
<div class="t" style="left:1430px;top:255px;color:#6d6d6d">Nee</div>
<div class="t" style="left:1510px;top:255px;width:114px;text-align:right;color:#6d6d6d">257 kB</div>
<div class="t" style="left:1638px;top:255px;color:#6d6d6d">62%</div>
<div class="t" style="left:1718px;top:255px;color:#6d6d6d">30/12/2014 23:48</div>
<div class="t" style="left:934px;top:276px;color:#1e1e1e">OxyPlot.dll</div>
<div class="t" style="left:1142px;top:276px;color:#6d6d6d">Toepassingsuitbreiding</div>
<div class="t" style="left:1300px;top:276px;width:116px;text-align:right;color:#6d6d6d">141 kB</div>
<div class="t" style="left:1430px;top:276px;color:#6d6d6d">Nee</div>
<div class="t" style="left:1510px;top:276px;width:114px;text-align:right;color:#6d6d6d">365 kB</div>
<div class="t" style="left:1638px;top:276px;color:#6d6d6d">62%</div>
<div class="t" style="left:1718px;top:276px;color:#6d6d6d">14/07/2013 15:56</div>
<div class="t" style="left:934px;top:297px;color:#1e1e1e">OxyPlot.WindowsForms.dll</div>
<div class="t" style="left:1142px;top:297px;color:#6d6d6d">Toepassingsuitbreiding</div>
<div class="t" style="left:1300px;top:297px;width:116px;text-align:right;color:#6d6d6d">10 kB</div>
<div class="t" style="left:1430px;top:297px;color:#6d6d6d">Nee</div>
<div class="t" style="left:1510px;top:297px;width:114px;text-align:right;color:#6d6d6d">22 kB</div>
<div class="t" style="left:1638px;top:297px;color:#6d6d6d">55%</div>
<div class="t" style="left:1718px;top:297px;color:#6d6d6d">14/07/2013 15:56</div>
<div class="a" style="left:1864px;top:584px;width:20px;height:20px;border:1px solid #3e9ae0;background:#cfe6f8"></div>
<svg class="a" style="left:1868px;top:588px" width="14" height="14" viewBox="0 0 14 14"><rect x="1" y="1" width="3" height="3" fill="#bcd7a8"/><rect x="1" y="5.5" width="3" height="3" fill="#f0b8a8"/><rect x="1" y="10" width="3" height="3" fill="#b8c8e8"/><path d="M5 2.5 H13 M5 7 H13 M5 11.5 H13" stroke="#555" stroke-width="1.2"/></svg>
<svg class="a" style="left:1891px;top:589px" width="14" height="13" viewBox="0 0 14 13"><rect x="0.5" y="0.5" width="13" height="12" fill="#cfe6f6" stroke="#8a9aaa"/><path d="M1 7 Q5 4 8 7 T13 6 V12 H1Z" fill="#3f7f4a"/><rect x="1" y="1" width="12" height="3" fill="#8fc3ec"/></svg>
<div class="a" style="left:725px;top:200px;width:470px;height:639px;background:#f0c86e;box-shadow:0 0 0 1px #dcae58 inset"></div>
<div class="a" style="left:735px;top:207px;width:15px;height:15px;background:#333;border-radius:1px"></div>
<div class="a" style="left:738px;top:210px;width:9px;height:9px;background:linear-gradient(135deg,#f4f4f4,#8a8a8a)"></div>
<div class="t" style="left:880px;top:206.5px;font-size:15px;line-height:18px;color:#333">Open Hardware Monitor</div>
<div class="a" style="left:1099px;top:213px;width:10px;height:2px;background:#222"></div>
<div class="a" style="left:1125px;top:207px;width:8px;height:5px;border:1.5px solid #222;border-top-width:3px"></div>
<div class="a" style="left:1143px;top:201px;width:45px;height:20px;background:#c75050"></div>
<svg class="a" style="left:1157px;top:204px" width="16" height="14" viewBox="0 0 16 14"><path d="M4 3 L12 11 M12 3 L4 11" stroke="#fff" stroke-width="1.8"/></svg>
<div class="a" style="left:733px;top:231px;width:454px;height:600px;background:#fff"></div>
<div class="a" style="left:733px;top:231px;width:454px;height:20px;background:#f5f6f7"></div>
<div class="t" style="left:740px;top:234px;color:#1e1e1e">File</div>
<div class="t" style="left:772px;top:234px;color:#1e1e1e">View</div>
<div class="t" style="left:811px;top:234px;color:#1e1e1e">Options</div>
<div class="t" style="left:867px;top:234px;color:#1e1e1e">Help</div>
<div class="a" style="left:733px;top:269px;width:437px;height:1px;background:#e3e8f0"></div>
<div class="a" style="left:981px;top:250px;width:1px;height:20px;background:#e3e8f0"></div>
<div class="a" style="left:1081px;top:250px;width:1px;height:20px;background:#e3e8f0"></div>
<div class="t" style="left:738px;top:254px;color:#1e1e1e">Sensor</div>
<div class="t" style="left:988px;top:254px;color:#1e1e1e">Value</div>
<div class="t" style="left:1088px;top:254px;color:#1e1e1e">Max</div>
<div class="a" style="left:733px;top:270px;width:437px;height:546px;overflow:hidden">
<div class="a" style="left:0;top:17px;width:437px;height:1px;background:#f3f3f3"></div>
<div class="a" style="left:0;top:35px;width:437px;height:1px;background:#f3f3f3"></div>
<div class="a" style="left:0;top:53px;width:437px;height:1px;background:#f3f3f3"></div>
<div class="a" style="left:0;top:71px;width:437px;height:1px;background:#f3f3f3"></div>
<div class="a" style="left:0;top:89px;width:437px;height:1px;background:#f3f3f3"></div>
<div class="a" style="left:0;top:107px;width:437px;height:1px;background:#f3f3f3"></div>
<div class="a" style="left:0;top:125px;width:437px;height:1px;background:#f3f3f3"></div>
<div class="a" style="left:0;top:143px;width:437px;height:1px;background:#f3f3f3"></div>
<div class="a" style="left:0;top:161px;width:437px;height:1px;background:#f3f3f3"></div>
<div class="a" style="left:0;top:162px;width:437px;height:18px;background:#ececec"></div>
<div class="a" style="left:0;top:179px;width:437px;height:1px;background:#f3f3f3"></div>
<div class="a" style="left:0;top:197px;width:437px;height:1px;background:#f3f3f3"></div>
<div class="a" style="left:0;top:215px;width:437px;height:1px;background:#f3f3f3"></div>
<div class="a" style="left:0;top:233px;width:437px;height:1px;background:#f3f3f3"></div>
<div class="a" style="left:0;top:251px;width:437px;height:1px;background:#f3f3f3"></div>
<div class="a" style="left:0;top:269px;width:437px;height:1px;background:#f3f3f3"></div>
<div class="a" style="left:0;top:287px;width:437px;height:1px;background:#f3f3f3"></div>
<div class="a" style="left:0;top:305px;width:437px;height:1px;background:#f3f3f3"></div>
<div class="a" style="left:0;top:323px;width:437px;height:1px;background:#f3f3f3"></div>
<div class="a" style="left:0;top:341px;width:437px;height:1px;background:#f3f3f3"></div>
<div class="a" style="left:0;top:359px;width:437px;height:1px;background:#f3f3f3"></div>
<div class="a" style="left:0;top:377px;width:437px;height:1px;background:#f3f3f3"></div>
<div class="a" style="left:0;top:395px;width:437px;height:1px;background:#f3f3f3"></div>
<div class="a" style="left:0;top:413px;width:437px;height:1px;background:#f3f3f3"></div>
<div class="a" style="left:0;top:431px;width:437px;height:1px;background:#f3f3f3"></div>
<div class="a" style="left:0;top:449px;width:437px;height:1px;background:#f3f3f3"></div>
<div class="a" style="left:0;top:467px;width:437px;height:1px;background:#f3f3f3"></div>
<div class="a" style="left:0;top:485px;width:437px;height:1px;background:#f3f3f3"></div>
<div class="a" style="left:0;top:503px;width:437px;height:1px;background:#f3f3f3"></div>
<div class="a" style="left:0;top:521px;width:437px;height:1px;background:#f3f3f3"></div>
<div class="a" style="left:0;top:539px;width:437px;height:1px;background:#f3f3f3"></div>
<div class="a" style="left:0;top:557px;width:437px;height:1px;background:#f3f3f3"></div>
<div class="a" style="left:29.5px;top:0px;width:0;height:560px;border-left:1px dotted #a0a0a0"></div>
<div class="a" style="left:67.5px;top:0px;width:0;height:297px;border-left:1px dotted #a0a0a0"></div>
<div class="a" style="left:86.5px;top:0px;width:0;height:99px;border-left:1px dotted #a0a0a0"></div>
<div class="a" style="left:86.5px;top:117px;width:0;height:126px;border-left:1px dotted #a0a0a0"></div>
<div class="a" style="left:86.5px;top:261px;width:0;height:18px;border-left:1px dotted #a0a0a0"></div>
<div class="a" style="left:86.5px;top:297px;width:0;height:90px;border-left:1px dotted #a0a0a0"></div>
<div class="a" style="left:49.0px;top:423px;width:0;height:137px;border-left:1px dotted #a0a0a0"></div>
<div class="a" style="left:67.5px;top:423px;width:0;height:90px;border-left:1px dotted #a0a0a0"></div>
<div class="a" style="left:87.0px;top:9px;width:10px;height:0;border-top:1px dotted #a0a0a0"></div>
<div class="t" style="left:106px;top:2.5px;color:#111">CPU VCore</div>
<div class="t" style="left:257px;top:2.5px;color:#111">1,768 V</div>
<div class="t" style="left:357px;top:2.5px;color:#111">1,776 V</div>
<div class="a" style="left:87.0px;top:27px;width:10px;height:0;border-top:1px dotted #a0a0a0"></div>
<div class="t" style="left:106px;top:20.5px;color:#111">AVCC</div>
<div class="t" style="left:257px;top:20.5px;color:#111">3,296 V</div>
<div class="t" style="left:357px;top:20.5px;color:#111">3,296 V</div>
<div class="a" style="left:87.0px;top:45px;width:10px;height:0;border-top:1px dotted #a0a0a0"></div>
<div class="t" style="left:106px;top:38.5px;color:#111">3VCC</div>
<div class="t" style="left:257px;top:38.5px;color:#111">3,296 V</div>
<div class="t" style="left:357px;top:38.5px;color:#111">3,296 V</div>
<div class="a" style="left:87.0px;top:63px;width:10px;height:0;border-top:1px dotted #a0a0a0"></div>
<div class="t" style="left:106px;top:56.5px;color:#111">3VSB</div>
<div class="t" style="left:257px;top:56.5px;color:#111">3,344 V</div>
<div class="t" style="left:357px;top:56.5px;color:#111">3,360 V</div>
<div class="a" style="left:87.0px;top:81px;width:10px;height:0;border-top:1px dotted #a0a0a0"></div>
<div class="t" style="left:106px;top:74.5px;color:#111">VBAT</div>
<div class="t" style="left:257px;top:74.5px;color:#111">3,280 V</div>
<div class="t" style="left:357px;top:74.5px;color:#111">3,296 V</div>
<div class="a" style="left:87.0px;top:99px;width:10px;height:0;border-top:1px dotted #a0a0a0"></div>
<div class="t" style="left:106px;top:92.5px;color:#111">VTT</div>
<div class="t" style="left:257px;top:92.5px;color:#111">1,008 V</div>
<div class="t" style="left:357px;top:92.5px;color:#111">1,008 V</div>
<div class="a" style="left:63.5px;top:112.5px;width:7px;height:7px;border:1px solid #a6a6a6;background:linear-gradient(#fff,#e6e6ee)"></div>
<div class="a" style="left:66.0px;top:116.5px;width:5px;height:1px;background:#4a5ab0"></div>
<div class="a" style="left:73.0px;top:117px;width:7px;height:0;border-top:1px dotted #a0a0a0"></div>
<svg class="a" style="left:81px;top:109px" width="16" height="16" viewBox="0 0 16 16"><path d="M13 1.5 L6 9" stroke="#bbb" stroke-width="3" stroke-linecap="round"/><path d="M9 6 L5 10.5" stroke="#e3242b" stroke-width="2.6" stroke-linecap="round"/><circle cx="4.5" cy="11.5" r="3.2" fill="#e3242b"/></svg>
<div class="t" style="left:103px;top:110.5px;color:#111">Temperatures</div>
<div class="a" style="left:87.0px;top:135px;width:10px;height:0;border-top:1px dotted #a0a0a0"></div>
<div class="t" style="left:106px;top:128.5px;color:#111">CPU Core</div>
<div class="t" style="left:257px;top:128.5px;color:#111">45,0 °C</div>
<div class="t" style="left:357px;top:128.5px;color:#111">71,0 °C</div>
<div class="a" style="left:87.0px;top:153px;width:10px;height:0;border-top:1px dotted #a0a0a0"></div>
<div class="t" style="left:106px;top:146.5px;color:#111">Temperature #1</div>
<div class="t" style="left:257px;top:146.5px;color:#111">52,0 °C</div>
<div class="t" style="left:357px;top:146.5px;color:#111">59,0 °C</div>
<div class="a" style="left:87.0px;top:171px;width:10px;height:0;border-top:1px dotted #a0a0a0"></div>
<div class="t" style="left:106px;top:164.5px;color:#111">Temperature #2</div>
<div class="t" style="left:257px;top:164.5px;color:#111">114,0 °C</div>
<div class="t" style="left:357px;top:164.5px;color:#111">114,5 °C</div>
<div class="a" style="left:87.0px;top:189px;width:10px;height:0;border-top:1px dotted #a0a0a0"></div>
<div class="t" style="left:106px;top:182.5px;color:#111">Temperature #3</div>
<div class="t" style="left:257px;top:182.5px;color:#111">45,5 °C</div>
<div class="t" style="left:357px;top:182.5px;color:#111">52,0 °C</div>
<div class="a" style="left:87.0px;top:207px;width:10px;height:0;border-top:1px dotted #a0a0a0"></div>
<div class="t" style="left:106px;top:200.5px;color:#111">Temperature #4</div>
<div class="t" style="left:257px;top:200.5px;color:#111">109,0 °C</div>
<div class="t" style="left:357px;top:200.5px;color:#111">109,0 °C</div>
<div class="a" style="left:87.0px;top:225px;width:10px;height:0;border-top:1px dotted #a0a0a0"></div>
<div class="t" style="left:106px;top:218.5px;color:#111">Temperature #5</div>
<div class="t" style="left:257px;top:218.5px;color:#111">13,0 °C</div>
<div class="t" style="left:357px;top:218.5px;color:#111">13,0 °C</div>
<div class="a" style="left:87.0px;top:243px;width:10px;height:0;border-top:1px dotted #a0a0a0"></div>
<div class="t" style="left:106px;top:236.5px;color:#111">Temperature #6</div>
<div class="t" style="left:257px;top:236.5px;color:#111">105,0 °C</div>
<div class="t" style="left:357px;top:236.5px;color:#111">105,0 °C</div>
<div class="a" style="left:63.5px;top:256.5px;width:7px;height:7px;border:1px solid #a6a6a6;background:linear-gradient(#fff,#e6e6ee)"></div>
<div class="a" style="left:66.0px;top:260.5px;width:5px;height:1px;background:#4a5ab0"></div>
<div class="a" style="left:73.0px;top:261px;width:7px;height:0;border-top:1px dotted #a0a0a0"></div>
<svg class="a" style="left:81px;top:253px" width="16" height="16" viewBox="0 0 16 16"><rect x="1" y="1" width="14" height="14" fill="#2a2a2a"/><path d="M8 8 L3 3 Q6 2 8 4Z M8 8 L13 3 Q14 6 12 8Z M8 8 L13 13 Q10 14 8 12Z M8 8 L3 13 Q2 10 4 8Z" fill="#eee"/><circle cx="8" cy="8" r="1.5" fill="#2a2a2a"/></svg>
<div class="t" style="left:103px;top:254.5px;color:#111">Fans</div>
<div class="a" style="left:87.0px;top:279px;width:10px;height:0;border-top:1px dotted #a0a0a0"></div>
<div class="t" style="left:106px;top:272.5px;color:#111">Fan #2</div>
<div class="t" style="left:257px;top:272.5px;color:#111">813 RPM</div>
<div class="t" style="left:357px;top:272.5px;color:#111">1590 RPM</div>
<div class="a" style="left:63.5px;top:292.5px;width:7px;height:7px;border:1px solid #a6a6a6;background:linear-gradient(#fff,#e6e6ee)"></div>
<div class="a" style="left:66.0px;top:296.5px;width:5px;height:1px;background:#4a5ab0"></div>
<div class="a" style="left:73.0px;top:297px;width:7px;height:0;border-top:1px dotted #a0a0a0"></div>
<svg class="a" style="left:81px;top:289px" width="16" height="16" viewBox="0 0 16 16"><defs><radialGradient id="gb" cx="0.4" cy="0.35" r="0.7"><stop offset="0" stop-color="#777"/><stop offset="1" stop-color="#111"/></radialGradient></defs><circle cx="8" cy="8.5" r="6" fill="url(#gb)"/></svg>
<div class="t" style="left:103px;top:290.5px;color:#111">Controls</div>
<div class="a" style="left:87.0px;top:315px;width:10px;height:0;border-top:1px dotted #a0a0a0"></div>
<div class="t" style="left:106px;top:308.5px;color:#111">Fan Control #1</div>
<div class="t" style="left:257px;top:308.5px;color:#111">49,8 %</div>
<div class="t" style="left:357px;top:308.5px;color:#111">49,8 %</div>
<div class="a" style="left:87.0px;top:333px;width:10px;height:0;border-top:1px dotted #a0a0a0"></div>
<div class="t" style="left:106px;top:326.5px;color:#111">Fan Control #2</div>
<div class="t" style="left:257px;top:326.5px;color:#111">30,2 %</div>
<div class="t" style="left:357px;top:326.5px;color:#111">44,3 %</div>
<div class="a" style="left:87.0px;top:351px;width:10px;height:0;border-top:1px dotted #a0a0a0"></div>
<div class="t" style="left:106px;top:344.5px;color:#111">Fan Control #3</div>
<div class="t" style="left:257px;top:344.5px;color:#111">100,0 %</div>
<div class="t" style="left:357px;top:344.5px;color:#111">100,0 %</div>
<div class="a" style="left:87.0px;top:369px;width:10px;height:0;border-top:1px dotted #a0a0a0"></div>
<div class="t" style="left:106px;top:362.5px;color:#111">Fan Control #4</div>
<div class="t" style="left:257px;top:362.5px;color:#111">100,0 %</div>
<div class="t" style="left:357px;top:362.5px;color:#111">100,0 %</div>
<div class="a" style="left:87.0px;top:387px;width:10px;height:0;border-top:1px dotted #a0a0a0"></div>
<div class="t" style="left:106px;top:380.5px;color:#111">Fan Control #5</div>
<div class="t" style="left:257px;top:380.5px;color:#111">100,0 %</div>
<div class="t" style="left:357px;top:380.5px;color:#111">100,0 %</div>
<div class="a" style="left:25.0px;top:400.5px;width:7px;height:7px;border:1px solid #a6a6a6;background:linear-gradient(#fff,#e6e6ee)"></div>
<div class="a" style="left:27.5px;top:404.5px;width:5px;height:1px;background:#4a5ab0"></div>
<div class="a" style="left:34.5px;top:405px;width:7.0px;height:0;border-top:1px dotted #a0a0a0"></div>
<svg class="a" style="left:42.5px;top:397px" width="16" height="16" viewBox="0 0 16 16"><rect x="0" y="0" width="16" height="16" fill="#16261f"/><rect x="1.5" y="1.5" width="13" height="13" fill="#3f8a72"/><rect x="2.5" y="2.5" width="11" height="11" fill="#2f6a58"/><rect x="5" y="6" width="6" height="4" fill="#0a0a0a"/></svg>
<div class="t" style="left:64.5px;top:398.5px;color:#111">Intel Core i7-4790</div>
<div class="a" style="left:45.0px;top:418.5px;width:7px;height:7px;border:1px solid #a6a6a6;background:linear-gradient(#fff,#e6e6ee)"></div>
<div class="a" style="left:47.5px;top:422.5px;width:5px;height:1px;background:#4a5ab0"></div>
<div class="a" style="left:54.5px;top:423px;width:7.0px;height:0;border-top:1px dotted #a0a0a0"></div>
<svg class="a" style="left:62.5px;top:415px" width="16" height="16" viewBox="0 0 16 16"><rect x="2" y="3" width="12" height="10" fill="#3b4ea8"/><path d="M4.5 3 V13 M7 3 V13 M9.5 3 V13 M12 3 V13" stroke="#9fb0ee" stroke-width="1"/></svg>
<div class="t" style="left:84.5px;top:416.5px;color:#111">Clocks</div>
<div class="a" style="left:68.0px;top:441px;width:10px;height:0;border-top:1px dotted #a0a0a0"></div>
<div class="t" style="left:87px;top:434.5px;color:#111">Bus Speed</div>
<div class="t" style="left:257px;top:434.5px;color:#111">100 MHz</div>
<div class="t" style="left:357px;top:434.5px;color:#111">100 MHz</div>
<div class="a" style="left:68.0px;top:459px;width:10px;height:0;border-top:1px dotted #a0a0a0"></div>
<div class="t" style="left:87px;top:452.5px;color:#111">CPU Core #1</div>
<div class="t" style="left:257px;top:452.5px;color:#111">1596 MHz</div>
<div class="t" style="left:357px;top:452.5px;color:#111">3991 MHz</div>
<div class="a" style="left:68.0px;top:477px;width:10px;height:0;border-top:1px dotted #a0a0a0"></div>
<div class="t" style="left:87px;top:470.5px;color:#111">CPU Core #2</div>
<div class="t" style="left:257px;top:470.5px;color:#111">1596 MHz</div>
<div class="t" style="left:357px;top:470.5px;color:#111">3991 MHz</div>
<div class="a" style="left:68.0px;top:495px;width:10px;height:0;border-top:1px dotted #a0a0a0"></div>
<div class="t" style="left:87px;top:488.5px;color:#111">CPU Core #3</div>
<div class="t" style="left:257px;top:488.5px;color:#111">1596 MHz</div>
<div class="t" style="left:357px;top:488.5px;color:#111">3991 MHz</div>
<div class="a" style="left:68.0px;top:513px;width:10px;height:0;border-top:1px dotted #a0a0a0"></div>
<div class="t" style="left:87px;top:506.5px;color:#111">CPU Core #4</div>
<div class="t" style="left:257px;top:506.5px;color:#111">1596 MHz</div>
<div class="t" style="left:357px;top:506.5px;color:#111">3991 MHz</div>
<div class="a" style="left:45.0px;top:526.5px;width:7px;height:7px;border:1px solid #a6a6a6;background:linear-gradient(#fff,#e6e6ee)"></div>
<div class="a" style="left:47.5px;top:530.5px;width:5px;height:1px;background:#4a5ab0"></div>
<div class="a" style="left:54.5px;top:531px;width:7.0px;height:0;border-top:1px dotted #a0a0a0"></div>
<svg class="a" style="left:62.5px;top:523px" width="16" height="16" viewBox="0 0 16 16"><path d="M13 1.5 L6 9" stroke="#bbb" stroke-width="3" stroke-linecap="round"/><path d="M9 6 L5 10.5" stroke="#e3242b" stroke-width="2.6" stroke-linecap="round"/><circle cx="4.5" cy="11.5" r="3.2" fill="#e3242b"/></svg>
<div class="t" style="left:84.5px;top:524.5px;color:#111">Temperatures</div>
</div>
<div class="a" style="left:1170px;top:250px;width:17px;height:566px;background:#f0f0f0"></div>
<div class="a" style="left:1170px;top:294px;width:17px;height:192px;background:#cdcdcd"></div>
<svg class="a" style="left:1173px;top:257px" width="11" height="7" viewBox="0 0 11 7"><path d="M1.5 6 L5.5 2 L9.5 6" fill="none" stroke="#555" stroke-width="2"/></svg>
<svg class="a" style="left:1173px;top:802px" width="11" height="7" viewBox="0 0 11 7"><path d="M1.5 1 L5.5 5 L9.5 1" fill="none" stroke="#555" stroke-width="2"/></svg>
<div class="a" style="left:733px;top:816px;width:454px;height:15px;background:#f0f0f0"></div>
<div class="a" style="left:750px;top:816px;width:390px;height:15px;background:#cdcdcd"></div>
<svg class="a" style="left:737px;top:818px" width="8" height="11" viewBox="0 0 8 11"><path d="M6 1.5 L2 5.5 L6 9.5" fill="none" stroke="#555" stroke-width="2"/></svg>
<svg class="a" style="left:1158px;top:818px" width="8" height="11" viewBox="0 0 8 11"><path d="M2 1.5 L6 5.5 L2 9.5" fill="none" stroke="#555" stroke-width="2"/></svg>
<div class="a" style="left:0;top:1040px;width:1920px;height:40px;background:rgba(142,130,72,0.55)"></div>
<div class="a" style="left:0;top:1040px;width:1920px;height:1px;background:rgba(90,60,10,0.25)"></div>
<svg class="a" style="left:11px;top:1047px" width="28" height="27" viewBox="0 0 28 27"><path d="M0.5 4 L11.5 2.5 V12.5 H0.5Z M13 2.3 L27.5 0.3 V12.5 H13Z M0.5 14 H11.5 V24 L0.5 22.5Z M13 14 H27.5 V26.5 L13 24.5Z" fill="#fff"/></svg>
<svg class="a" style="left:63px;top:1045px" width="36" height="30" viewBox="0 0 36 30"><path d="M18 1.5 L34 15.5 H29 V28 H21.5 V20 H14.5 V28 H7 V15.5 H2Z" fill="#fff"/></svg>
<div class="a" style="left:113px;top:1041px;width:54px;height:39px;background:rgba(255,235,190,0.17);box-shadow:inset 0 0 0 1px rgba(255,235,190,0.25)"></div>
<div class="a" style="left:167px;top:1041px;width:4px;height:39px;background:rgba(255,235,190,0.15);box-shadow:inset -1px 0 0 rgba(255,235,190,0.25)"></div>
<div class="a" style="left:299px;top:1041px;width:56px;height:39px;background:rgba(255,235,190,0.17);box-shadow:inset 0 0 0 1px rgba(255,235,190,0.25)"></div>
<div class="a" style="left:355px;top:1041px;width:3px;height:39px;background:rgba(255,235,190,0.15);box-shadow:inset -1px 0 0 rgba(255,235,190,0.25)"></div>
<div class="a" style="left:361px;top:1041px;width:60px;height:39px;background:rgba(255,235,190,0.17);box-shadow:inset 0 0 0 1px rgba(255,235,190,0.25)"></div>
<div class="a" style="left:423px;top:1041px;width:60px;height:39px;background:rgba(255,235,190,0.17);box-shadow:inset 0 0 0 1px rgba(255,235,190,0.25)"></div>
<div class="a" style="left:486px;top:1041px;width:58px;height:39px;background:rgba(255,240,210,0.42);box-shadow:inset 0 0 0 1px rgba(255,248,230,0.55)"></div>
<svg class="a" style="left:124px;top:1046px" width="32" height="30" viewBox="0 0 32 30"><path d="M3 5 H13 L15 7 H29 V22 H3Z" fill="#e6c064"/><rect x="7" y="3" width="4" height="3" fill="#2ea84a"/><rect x="15" y="4" width="4" height="3" fill="#d03030"/><rect x="22" y="6" width="4" height="3" fill="#3a8ad8"/><path d="M3 10 H29 V22 H3Z" fill="#f8e4a4"/><path d="M5 17 H27 V28 H21 V23 H11 V28 H5Z" fill="#7cc0ee"/><path d="M5 17 H27 V19 H5Z" fill="#a8dcf8"/></svg>
<svg class="a" style="left:192px;top:1045px" width="26" height="32" viewBox="0 0 26 32"><path d="M2 2 H18 L24 8 V30 H2Z" fill="#fff"/><path d="M18 2 V8 H24" fill="#ddd"/></svg>
<div class="a" style="left:251px;top:1045px;width:31px;height:30px;background:#139a1d"></div>
<svg class="a" style="left:255px;top:1048px" width="24" height="24" viewBox="0 0 24 24"><path d="M8 7 V4 Q12 1 16 4 V7" fill="none" stroke="#fff" stroke-width="1.6"/><path d="M4 8 L20 7 V20 L4 21Z" fill="#fff"/><path d="M6 10 H11 V14 H6Z M13 10 H18 V14 H13Z M6 15.5 H11 V19 H6Z M13 15.5 H18 V19 H13Z" fill="#139a1d"/></svg>
<svg class="a" style="left:310px;top:1044px" width="32" height="32" viewBox="0 0 32 32"><path d="M5 17 Q5 6 16.5 6 Q28 6 28 17.5 V19 H12 Q12.5 24 17 24 Q21 24 23 21 H28 Q25.5 28.5 16.5 28.5 Q5 28.5 5 17Z M12 14 H21.5 Q21 10 16.8 10 Q12.5 10 12 14Z" fill="#3cb0ec"/><path d="M5 17 Q5 6 16.5 6 Q28 6 28 17.5 V19 H12" fill="none" stroke="#1e88d0" stroke-width="0.8"/><path d="M6 30 Q0 26 8 14 Q17 1 28 2 Q33 4 28 13" fill="none" stroke="#f6c82a" stroke-width="2.4"/></svg>
<svg class="a" style="left:377px;top:1045px" width="28" height="30" viewBox="0 0 28 30"><path d="M4 4 H24 V27 L20 25 L4 26Z" fill="#e4eef8" stroke="#8aa8c8" stroke-width="1"/><rect x="4" y="2" width="20" height="4" fill="#a8c4e4"/><path d="M7 20 L11 9 L15 20 M8.5 16 H13.5" fill="none" stroke="#f07a2a" stroke-width="2.6"/><rect x="15" y="9" width="8" height="6" fill="#7aa4da"/><path d="M6 22 H22" stroke="#b8c8da" stroke-width="1"/></svg>
<svg class="a" style="left:438px;top:1045px" width="31" height="31" viewBox="0 0 31 31"><rect x="0.5" y="0.5" width="30" height="30" fill="#121212" stroke="#3c3c3c"/><path d="M2 28 Q4 17 14 13 Q23 10 29 14 V28 H25 Q25 20 20 19.5 Q14 19.5 11 28Z" fill="#76b900"/><path d="M11 28 Q13 22 19 22 Q23 22.5 23 28Z" fill="#121212"/><path d="M15 28 Q17 24.5 20 24.5 Q21.5 25 21.5 28Z" fill="#76b900"/><path d="M5 24 Q10 18 16 16" fill="none" stroke="#121212" stroke-width="1.5"/></svg>
<div class="a" style="left:502px;top:1046px;width:26px;height:26px;background:#2e2e2e;border-radius:1px;box-shadow:0 1px 2px rgba(0,0,0,0.4)"></div>
<div class="a" style="left:506px;top:1050px;width:17px;height:16px;background:linear-gradient(135deg,#f4f4f4,#7a7a7a)"></div>
<svg class="a" style="left:1731px;top:1057px" width="14" height="8" viewBox="0 0 14 8"><path d="M2 7 L7 2 L12 7Z" fill="#fff"/></svg>
<svg class="a" style="left:1753px;top:1050px" width="20" height="20" viewBox="0 0 20 20"><rect x="6" y="3" width="12" height="9" fill="none" stroke="#fff" stroke-width="1.6"/><path d="M12 12 V16 M8 17 H16" stroke="#fff" stroke-width="1.6"/><rect x="1" y="2" width="5" height="5" fill="#fff" opacity="0.9"/><path d="M2 8 V14 H6" fill="none" stroke="#fff" stroke-width="1"/></svg>
<svg class="a" style="left:1778px;top:1050px" width="20" height="20" viewBox="0 0 20 20"><path d="M2 7 H6 L11 2 V18 L6 13 H2Z" fill="#fff"/><path d="M14 6 Q16 10 14 14 M16 4 Q19 10 16 16" fill="none" stroke="#fff" stroke-width="1.2"/></svg>
<div class="t" style="left:1808px;top:1053px;color:#fff">NLD</div>
<div class="t" style="left:1846px;top:1045px;width:60px;text-align:center;color:#fff">21:08</div>
<div class="t" style="left:1845px;top:1062px;color:#fff">15/03/2015</div>
</div></body></html>
